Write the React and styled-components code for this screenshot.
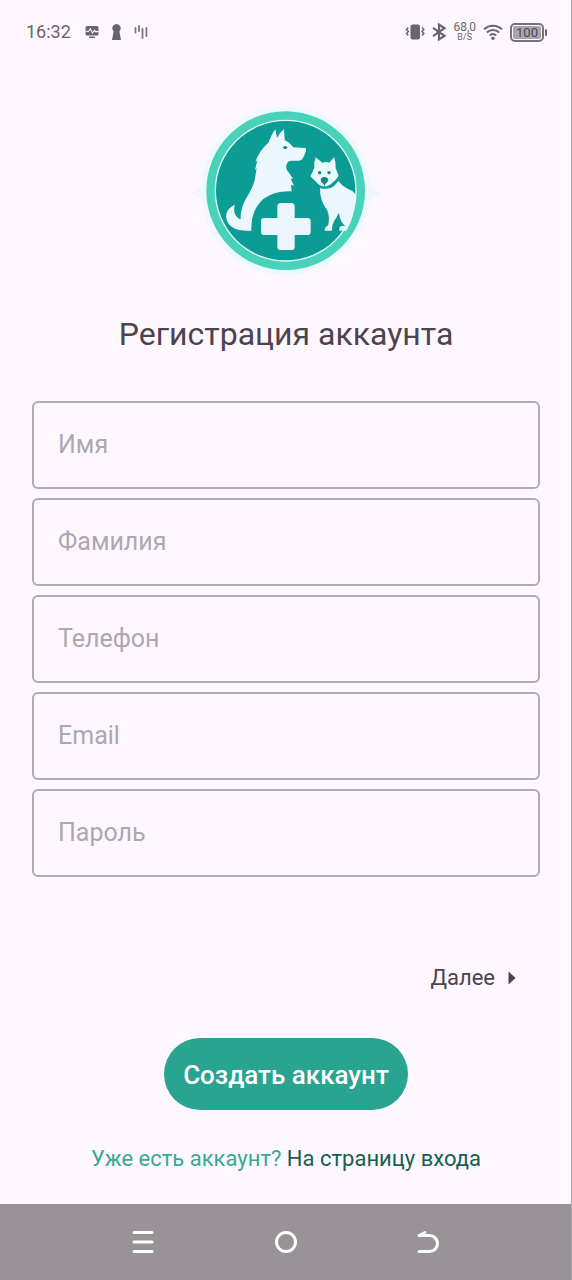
import React from 'react';
import styled, { createGlobalStyle } from 'styled-components';

const GlobalStyle = createGlobalStyle`
  *, *::before, *::after { box-sizing: border-box; }
  body {
    margin: 0;
    background: #fef7ff;
    color: #4b444e;
    font-family: Roboto, "Noto Sans", sans-serif;
  }
`;

const Screen = styled.div`
  min-height: 100vh;
  display: flex;
  flex-direction: column;
  border-right: 1px solid #aaa4ad;
`;

const StatusBar = styled.header`
  height: 64px;
  padding: 0 24px 0 26px;
  display: flex;
  align-items: center;
  justify-content: space-between;
  color: #6a656c;
`;

const StatusGroup = styled.div`
  display: flex;
  align-items: center;
  gap: ${(p) => p.$gap};
`;

const Clock = styled.time`
  font-size: 18px;
  line-height: 24px;
  margin-right: 2px;
`;

const Speed = styled.div`
  display: flex;
  flex-direction: column;
  align-items: center;
  padding-bottom: 2px;
  font-size: 12px;
  line-height: 11px;
`;

const SpeedUnit = styled.span`
  font-size: 9px;
  line-height: 8px;
`;

const Battery = styled.div`
  display: flex;
  align-items: center;
  gap: 1px;
  &::after {
    content: "";
    width: 2px;
    height: 7px;
    border-radius: 1px;
    background: #6a656c;
  }
`;

const BatteryBody = styled.div`
  width: 34px;
  height: 19px;
  border: 2px solid #77727a;
  border-radius: 5px;
  padding: 1px;
`;

const BatteryLevel = styled.div`
  height: 13px;
  border-radius: 2px;
  background: #aaa5ad;
  color: #4b464d;
  font-size: 13px;
  line-height: 14px;
  text-align: center;
`;

const Main = styled.main`
  flex: 1;
  display: flex;
  flex-direction: column;
  align-items: center;
  padding: 34px 31px 29px 32px;
`;

const Title = styled.h1`
  margin: 36px 0 0;
  font-size: 32px;
  line-height: 40px;
  font-weight: 400;
  text-align: center;
`;

const Form = styled.form`
  width: 100%;
  margin-top: 47px;
  display: flex;
  flex-direction: column;
  align-items: center;
`;

const Fields = styled.div`
  width: 100%;
  display: flex;
  flex-direction: column;
  gap: 9px;
`;

const Field = styled.input`
  width: 100%;
  height: 88px;
  padding: 0 24px 2px;
  border: 2px solid #b0abb3;
  border-radius: 6px;
  background: transparent;
  color: #4b444e;
  font: 400 25px/32px Roboto, "Noto Sans", sans-serif;
  outline: none;
  &::placeholder { color: #aca8ae; opacity: 1; }
  &:focus { border-color: #28a490; }
`;

const NextButton = styled.button`
  align-self: flex-end;
  margin-top: 85px;
  padding: 0 24px 0 0;
  height: 32px;
  display: flex;
  align-items: center;
  gap: 13px;
  border: 0;
  background: none;
  color: #4b444e;
  font: 400 22px/32px Roboto, "Noto Sans", sans-serif;
  cursor: pointer;
`;

const SubmitButton = styled.button`
  margin-top: 44px;
  height: 72px;
  padding: 2px 19px 0;
  border: 0;
  border-radius: 36px;
  background: #28a490;
  color: #fff;
  font: 500 26px/32px Roboto, "Noto Sans", sans-serif;
  cursor: pointer;
`;

const LoginLine = styled.p`
  margin: 33px 0 0;
  font-size: 22px;
  line-height: 32px;
  color: #36aa94;
  text-align: center;
`;

const LoginLink = styled.a`
  color: #17604f;
  text-decoration: none;
`;

const NavBar = styled.nav`
  flex: none;
  height: 76px;
  padding: 0 12.5%;
  display: flex;
  align-items: center;
  justify-content: space-around;
  background: #999398;
`;

const NavButton = styled.button`
  width: 32px;
  height: 32px;
  padding: 0;
  border: 0;
  background: none;
  display: flex;
  align-items: center;
  justify-content: center;
  cursor: pointer;
`;

const navStroke = {
  width: 32,
  height: 32,
  viewBox: '0 0 32 32',
  fill: 'none',
  stroke: '#fff',
  strokeWidth: 3,
  strokeLinecap: 'round',
  strokeLinejoin: 'round',
  'aria-hidden': true,
};

const MonitorIcon = () => (
  <svg width="14" height="14" viewBox="0 0 14 14" aria-hidden="true">
    <rect x="0.5" y="1" width="13" height="9.6" rx="1.6" fill="currentColor" />
    <path d="M4 11.6h6v1.4H4z" fill="currentColor" />
    <path d="M0.5 6.2h3.2l1.6-2.4 2.2 4.4 1.8-3 1 1.4h3.2" fill="none" stroke="#fef7ff" strokeWidth="1.1" />
  </svg>
);

const KeyholeIcon = () => (
  <svg width="11" height="18" viewBox="0 0 11 18" aria-hidden="true">
    <path d="M5.5 1a4.3 4.3 0 0 1 2.9 7.5L10 17H1l1.6-8.5A4.3 4.3 0 0 1 5.5 1z" fill="currentColor" />
  </svg>
);

const WaveIcon = () => (
  <svg width="14" height="16" viewBox="0 0 14 16" fill="none" stroke="currentColor" strokeWidth="1.8" strokeLinecap="round" aria-hidden="true">
    <path d="M1.5 4v4.500M5 2v5M8.500 5v9M12.500 4v8" opacity="0.9" />
  </svg>
);

const VibrateIcon = () => (
  <svg width="20" height="18" viewBox="0 0 20 18" aria-hidden="true">
    <rect x="5.5" y="1.5" width="9.5" height="15" rx="2" fill="currentColor" />
    <path d="M3.3 4.500l-1.800 2 1.800 2-1.800 2 1.800 2M17 4.500l1.800 2-1.800 2 1.800 2-1.800 2" fill="none" stroke="currentColor" strokeWidth="1.500" />
  </svg>
);

const BluetoothIcon = () => (
  <svg width="14" height="18" viewBox="0 0 14 18" fill="none" stroke="currentColor" strokeWidth="2.2" aria-hidden="true">
    <path d="M1 4.800l11.500 8L7 16.400V1.600l5.500 3.600L1 13.200" />
  </svg>
);

const WifiIcon = () => (
  <svg width="20" height="18" viewBox="0 0 20 18" fill="none" stroke="currentColor" strokeWidth="2" aria-hidden="true">
    <path d="M1 6.400a13 13 0 0 1 18 0M3.900 9.500a9 9 0 0 1 12.200 0M6.700 12.500a5 5 0 0 1 6.600 0" />
    <circle cx="10" cy="15.200" r="1.700" fill="currentColor" stroke="none" />
  </svg>
);

const Logo = () => (
  <svg width="200" height="180" viewBox="0 0 600 540" role="img" aria-label="Ветеринарная клиника">
    <path d="M16 284l34-22v44zM582 284l-34-22v44z" fill="#eef8fb" />
    <circle cx="299" cy="278" r="253" fill="#ecfafb" />
    <circle cx="299" cy="278" r="238" fill="#48d2b9" />
    <circle cx="299" cy="278" r="213" fill="#e6fbf8" />
    <circle cx="299" cy="278" r="209" fill="#0b9c95" />
    <g fill="#ebf7fc">
      <path d="M248 133 C253 119 260 104 268 94 L273 119 Q282 103 294 94 L296 126 Q313 134 322 148 L359 150 Q361 157 359 162 C355 170 354 180 344 187 C332 191 316 185 306 192 C297 203 300 216 309 224 L321 242 L314 242 L324 263 L315 260 L317 280 C280 279 248 287 225 310 C202 335 196 362 196 398 C175 399 154 398 139 388 C121 376 116 356 124 340 Q131 326 147 320 C140 337 147 359 164 364 C163 334 174 310 185 293 C196 275 205 258 208 234 L212 211 L207 216 L214 187 L208 192 Q219 160 248 133Z" />
      <path d="M389 178 L409 194 Q421 190 430 194 L445 177 Q450 198 449 211 L458 233 Q451 245 439 254 Q428 265 414 266 Q400 264 390 251 L373 235 L385 210 Q383 194 389 178Z" />
      <path d="M402 270 Q429 278 447 261 L457 249 Q466 262 481 270 Q498 276 509 289 Q510 335 492 377 L481 398 L460 398 Q458 389 464 385 L478 383 Q462 373 459 344 Q452 358 444 370 Q437 383 438 398 L416 398 Q415 388 427 382 Q432 354 423 335 Q401 309 402 270Z" />
      <path d="M285 315H315Q326 315 326 326V360H364Q374 360 374 370V401Q374 411 364 411H326V446Q326 456 316 456H284Q274 456 274 446V411H235Q225 411 225 401V370Q225 360 235 360H274V326Q274 315 285 315Z" />
    </g>
    <g fill="#0b8983">
      <path d="M291 147q6-6 13 0-1 7-7 7-5-1-6-7z" />
      <circle cx="401" cy="224" r="5" />
      <circle cx="429" cy="224" r="5" />
      <path d="M404 246Q405 237 415 237Q426 238 427 247Q424 255 417 258L416 266L412 258Q405 254 404 246Z" />
    </g>
    <path d="M398 263Q412 272 431 266Q447 259 454 246" fill="none" stroke="#0b9c95" strokeWidth="4" />
  </svg>
);

const FIELDS = [
  { name: 'firstName', label: 'Имя', type: 'text' },
  { name: 'lastName', label: 'Фамилия', type: 'text' },
  { name: 'phone', label: 'Телефон', type: 'tel' },
  { name: 'email', label: 'Email', type: 'email' },
  { name: 'password', label: 'Пароль', type: 'password' },
];

export default function App() {
  return (
    <>
      <GlobalStyle />
      <Screen>
        <StatusBar>
          <StatusGroup $gap="12px">
            <Clock>16:32</Clock>
            <MonitorIcon />
            <KeyholeIcon />
            <WaveIcon />
          </StatusGroup>
          <StatusGroup $gap="7px">
            <VibrateIcon />
            <BluetoothIcon />
            <Speed>
              68,0
              <SpeedUnit>B/S</SpeedUnit>
            </Speed>
            <WifiIcon />
            <Battery>
              <BatteryBody>
                <BatteryLevel>100</BatteryLevel>
              </BatteryBody>
            </Battery>
          </StatusGroup>
        </StatusBar>
        <Main>
          <Logo />
          <Title>Регистрация аккаунта</Title>
          <Form onSubmit={(e) => e.preventDefault()}>
            <Fields>
              {FIELDS.map((f) => (
                <Field key={f.name} name={f.name} type={f.type} placeholder={f.label} aria-label={f.label} />
              ))}
            </Fields>
            <NextButton type="button">
              Далее
              <svg width="8" height="14" viewBox="0 0 8 14" aria-hidden="true">
                <path d="M0.5 0.5L7.5 7L0.5 13.5z" fill="currentColor" />
              </svg>
            </NextButton>
            <SubmitButton type="submit">Создать аккаунт</SubmitButton>
          </Form>
          <LoginLine>
            Уже есть аккаунт? <LoginLink href="#login">На страницу входа</LoginLink>
          </LoginLine>
        </Main>
        <NavBar>
          <NavButton aria-label="Меню">
            <svg {...navStroke}>
              <path d="M7 6.5h18M7 16h18M7 25.5h18" />
            </svg>
          </NavButton>
          <NavButton aria-label="Домой">
            <svg {...navStroke}>
              <circle cx="16" cy="16" r="9.5" />
            </svg>
          </NavButton>
          <NavButton aria-label="Назад">
            <svg {...navStroke}>
              <path d="M13 6.500L7 9.500H17.500a8 8 0 0 1 0 16H7" />
            </svg>
          </NavButton>
        </NavBar>
      </Screen>
    </>
  );
}
